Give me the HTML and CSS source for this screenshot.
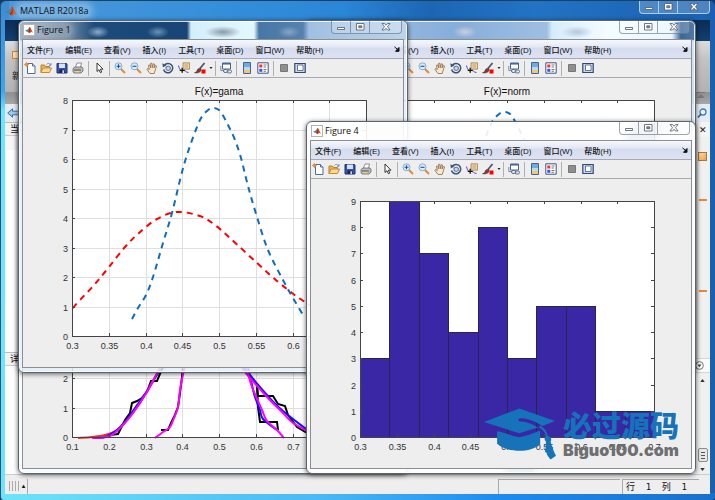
FILE: index.html
```html
<!DOCTYPE html>
<html lang="zh-CN">
<head>
    <meta charset="UTF-8">
    <meta name="viewport" content="width=device-width, initial-scale=1.0">
    <title>MATLAB R2018a</title>
    <link rel="stylesheet" href="styles.css">
</head>
<body>
    <svg class="defs" aria-hidden="true">
        <symbol id="logo" viewBox="0 0 12 12">
            <path d="M0 7l3.500-1.500L7 2l1 2-3.500 5-1.500-.5z" fill="#3f86b8"/>
            <path d="M7 1c1.500 1 2.500 5 5 9l-2.500-1.500L7 11 4.500 9C6 7 6 3 7 1z" fill="#d9480f"/>
            <path d="M7 1c.6 3 .6 6-2.500 8l1 .8C8 8 8.500 5 7 1z" fill="#7c2514"/>
        </symbol>
        <symbol id="new" viewBox="0 0 12 12">
            <path d="M3.500 1.500h5l2.500 2.500v7.500H3.500z" fill="#fff" stroke="#4b6f9f"/>
            <path d="M8.500 1.500V4H11" fill="#cfe0f5" stroke="#4b6f9f"/>
            <path d="M0 2.500h5M2.500 0v5M1 1l3 3M4 1L1 4" stroke="#e8883a" stroke-width=".9"/>
        </symbol>
        <symbol id="open" viewBox="0 0 12 12">
            <path d="M1 10.500V3h3.500l1 1.500h4V6" fill="#e8b45f" stroke="#b97f2a"/>
            <path d="M1 10.500L3 6h8.500l-2 4.500z" fill="#fbd98d" stroke="#c58a32"/>
            <path d="M6.500 2.500c1-1.500 3-1.500 4 .5M11 1v2.300H9" fill="none" stroke="#4a7fc0" stroke-width=".8"/>
        </symbol>
        <symbol id="save" viewBox="0 0 12 12">
            <path d="M1 1.500h9.500l.5.5v9H1z" fill="#3355b5" stroke="#1f2f7a"/>
            <path d="M3 1.500h6V6H3z" fill="#d6e4fb"/>
            <path d="M3.500 7.500h5V11h-5z" fill="#1d2348"/>
            <path d="M6.500 8.300h1.300V11H6.500z" fill="#fff"/>
        </symbol>
        <symbol id="print" viewBox="0 0 12 12">
            <path d="M3.500 5L5 1h4.500L8.500 5" fill="#fff" stroke="#777" stroke-width=".8"/>
            <path d="M1 6.500L3 5h7l1 1.500V9L9 11H2L1 9.500z" fill="#b9bcc0" stroke="#666" stroke-width=".8"/>
            <path d="M2 8h7" stroke="#555"/>
            <path d="M3 9.700h4.500" stroke="#e8e06a"/>
        </symbol>
        <symbol id="cursor" viewBox="0 0 12 12">
            <path d="M4 1v8.500L6 7.700l1.400 3 1.300-.6-1.300-2.900H10z" fill="#fff" stroke="#222" stroke-width=".9"/>
        </symbol>
        <symbol id="zoomin" viewBox="0 0 12 12">
            <path d="M6.500 6.500l4.500 4.500" stroke="#e08a3c" stroke-width="2"/>
            <circle cx="4.500" cy="4.300" r="3.500" fill="#d9ecfa" stroke="#7fb0d8"/>
            <path d="M2.500 4.300h4M4.500 2.300v4" stroke="#1d4fa0" stroke-width="1.100"/>
        </symbol>
        <symbol id="zoomout" viewBox="0 0 12 12">
            <path d="M6.500 6.500l4.500 4.500" stroke="#e08a3c" stroke-width="2"/>
            <circle cx="4.500" cy="4.300" r="3.500" fill="#d9ecfa" stroke="#7fb0d8"/>
            <path d="M2.500 4.300h4" stroke="#1d4fa0" stroke-width="1.100"/>
        </symbol>
        <symbol id="hand" viewBox="0 0 12 12">
            <path d="M4 11.500L.8 7.200l.9-.8 1.700 1.200-1-4.300 1.200-.4 1.200 3-.2-4.600h1.300L6.400 5.600l.9-3.900 1.200.3-.5 4 1.400-2.600 1.100.5-1.500 5-.8 2.600z" fill="#fbe6cc" stroke="#8a6a48" stroke-width=".8"/>
        </symbol>
        <symbol id="rotate" viewBox="0 0 12 12">
            <path d="M2.300 3.200A4.700 4.700 0 1 1 1.500 7.500" fill="none" stroke="#39557d" stroke-width="1.500"/>
            <path d="M.3 1.300l.6 4 3.600-1.500z" fill="#39557d"/>
            <path d="M4 5l2.200-.9L8.300 5v2.600l-2.100 1L4 7.600z" fill="#c9d6e8" stroke="#39557d" stroke-width=".8"/>
        </symbol>
        <symbol id="datatip" viewBox="0 0 12 12">
            <path d="M5 .8h6.500v6.400H5z" fill="#ecd0a0" stroke="#a58250" stroke-width=".8"/>
            <path d="M6.500 3h3.500M6.500 5h3.500" stroke="#b99667" stroke-width=".7"/>
            <path d="M.5 3.500C1.500 8 3 9 5 8.500s3 2 5.500 2" fill="none" stroke="#3c3cd0" stroke-width=".9"/>
            <path d="M1.700 8.300h5M4.200 5.800v5" stroke="#111" stroke-width="1.300"/>
        </symbol>
        <symbol id="brush" viewBox="0 0 12 12">
            <path d="M10.500 1L6 6.500" stroke="#445a78" stroke-width="1.800"/>
            <path d="M6.700 6.400C5 6 3.500 7 3 8.500S1.500 10.500.5 10.700c2.500.8 6 0 6.700-2.700z" fill="#8b3a32" stroke="#333" stroke-width=".5"/>
            <path d="M7.500 7.500h4v4h-4z" fill="#f00"/>
        </symbol>
        <symbol id="caret" viewBox="0 0 4 12"><path d="M.5 5h3L2 7z" fill="#222"/></symbol>
        <symbol id="link" viewBox="0 0 12 12">
            <path d="M2.500 1h8v6h-8z" fill="#fff" stroke="#446790"/>
            <path d="M2.500 1.800h8" stroke="#446790" stroke-width="1.500"/>
            <path d="M.8 4v4.500H6" fill="none" stroke="#6f8fb5"/>
            <rect x="3.500" y="7.500" width="4.500" height="3" rx="1.500" fill="#e5ebf2" stroke="#5a6f8c"/>
            <rect x="7" y="8" width="4.500" height="3" rx="1.500" fill="none" stroke="#5a6f8c"/>
        </symbol>
        <symbol id="colorbar" viewBox="0 0 12 12">
            <path d="M2.500.5h7v11h-7z" fill="#fff" stroke="#46648f"/>
            <path d="M3 1h6v4H3z" fill="#69afe0"/>
            <path d="M3 5h6v3H3z" fill="#b9dde6"/>
            <path d="M3 8h6v3H3z" fill="#f2c67a"/>
        </symbol>
        <symbol id="legend" viewBox="0 0 12 12">
            <path d="M.8.8h10.400v10.400H.8z" fill="#fff" stroke="#3d567d"/>
            <path d="M2.300 2.500h3v3h-3z" fill="#e03a3a"/>
            <path d="M2.300 6.800h3v3h-3z" fill="#3a55d8"/>
            <path d="M6.500 3h3M6.500 5h2.500M6.500 7.500h3M6.500 9.300h2.500" stroke="#555" stroke-width=".8"/>
        </symbol>
        <symbol id="hidetools" viewBox="0 0 12 12">
            <path d="M2.500 2.500h7v7h-7z" fill="#8e8e8e" stroke="#777"/>
        </symbol>
        <symbol id="showtools" viewBox="0 0 12 12">
            <path d="M.8 1.500h10.400v9H.8z" fill="#cdd9ea" stroke="#2f4a75" stroke-width="1.200"/>
            <path d="M3.500 3h5.500v5.500H3.500z" fill="#fff" stroke="#2f4a75" stroke-width=".7"/>
        </symbol>
        <symbol id="min" viewBox="0 0 12 10"><path d="M2.500 5.500h7v2h-7z" fill="#fff" stroke="#4c5866" stroke-width=".8"/></symbol>
        <symbol id="max" viewBox="0 0 12 10">
            <path d="M2.500 1.500h7.500v6.500H2.500z" fill="#fff" stroke="#4c5866" stroke-width=".8"/>
            <path d="M4.800 3.800h3v1.900h-3z" fill="#8a98a8" stroke="#4c5866" stroke-width=".8"/>
        </symbol>
        <symbol id="close" viewBox="0 0 12 10">
            <path d="M2 1.500h2.500L6 3.300l1.500-1.800H10L7.500 4.700 10 8H7.500L6 6.200 4.500 8H2l2.500-3.300z" fill="#fff" stroke="#4c5866" stroke-width=".8"/>
        </symbol>
    </svg>

    <div class="app">
        <header class="titlebar">
            <svg class="logo"><use href="#logo"/></svg>
            <h1>MATLAB R2018a</h1>
            <div class="win-buttons">
                <button aria-label="最小化"><svg><use href="#min"/></svg></button>
                <button aria-label="最大化"><svg><use href="#max"/></svg></button>
                <button class="close" aria-label="关闭"><svg><use href="#close"/></svg></button>
            </div>
        </header>
        <div class="tabs"></div>
        <div class="ribbon">
            <button class="ribbon-new"><i></i>新</button>
            <svg class="pin" viewBox="0 0 8 8"><path d="M0 .5h8" stroke="#777"/><path d="M4 2l4 4H0z" fill="#777"/></svg>
        </div>
        <div class="address">
            <button aria-label="后退"><svg class="back" viewBox="0 0 12 10"><path d="M.7 5L5.500.8v2.400h6v3.600h-6v2.400z" fill="#9cc9ee" stroke="#3b6ea5"/></svg></button>
            <button aria-label="搜索"><svg class="search" viewBox="0 0 10 10"><circle cx="6" cy="4" r="3" fill="#e6f3ff" stroke="#3a7cc4" stroke-width="1.300"/><path d="M4 6L1 9.500" stroke="#2b62a5" stroke-width="1.700"/></svg></button>
        </div>
        <main class="panels">
            <section class="side">
                <h2>当</h2>
                <div class="files"></div>
                <h2>详</h2>
                <div class="details"></div>
            </section>
            <section class="editor">
                <div class="editor-head"><button aria-label="关闭编辑器">✕</button></div>
                <div class="marks">
                    <i class="mark-state"></i>
                    <i class="mark"></i>
                    <i class="mark second"></i>
                </div>
                <div class="editor-head low"><svg viewBox="0 0 10 10"><circle cx="5" cy="5" r="4.300" fill="#fff" stroke="#666"/><path d="M2.800 4h4.400L5 7z" fill="#444"/></svg></div>
                <div class="scroll">
                    <svg viewBox="0 0 6 4"><path d="M3 0l3 4H0z" fill="#333"/></svg>
                    <i class="thumb"></i>
                    <svg viewBox="0 0 6 4"><path d="M3 4l3-4H0z" fill="#333"/></svg>
                </div>
            </section>
        </main>
        <footer class="statusbar">
            <span class="grip"></span>
            <span class="grip-arrow">▴</span>
            <span class="status-main"></span>
            <span class="status-box"></span>
            <span class="status-box position"><span>行</span><span>1</span><span>列</span><span>1</span></span>
        </footer>
    </div>

    <div class="figure fig3" data-name="Figure 3"></div>
    <div class="figure fig2" data-name="Figure 2"></div>
    <div class="figure fig1" data-name="Figure 1"></div>
    <div class="figure fig4" data-name="Figure 4"></div>

    <div class="watermark">
        <svg viewBox="36 206 214 154">
            <g fill="#1673b9">
                <path d="M36 247L141 207l106 37-37 15c-20-12-42-24-66-23-9 2-8 8 0 10 20 1 38 8 52 18l-55 17z"/>
                <path d="M75 275c20 3 40 12 66 18 22-5 42-12 58-20l4 3v38c-15 12-38 19-62 19s-52-7-66-21z"/>
                <path d="M204 258c12 8 19 18 22 31 10 2 12 10 8 17 4 15 9 29 16 42l-16 11c-7-8-12-14-12-20l-5-3c2-11 3-20 3-30-6-7-5-13 0-18-4-11-9-18-21-25z"/>
            </g>
        </svg>
        <div>
            <p class="brand">必过源码</p>
            <p class="site">Biguo100.com</p>
        </div>
    </div>

    <template id="figure">
        <div class="fig-title">
            <span class="fig-icon"><svg><use href="#logo"/></svg></span>
            <h2></h2>
            <div class="win-buttons">
                <button aria-label="最小化"><svg><use href="#min"/></svg></button>
                <button aria-label="最大化"><svg><use href="#max"/></svg></button>
                <button class="close" aria-label="关闭"><svg><use href="#close"/></svg></button>
            </div>
        </div>
        <div class="fig-body">
            <nav class="menu">
                <button>文件(F)</button>
                <button>编辑(E)</button>
                <button>查看(V)</button>
                <button>插入(I)</button>
                <button>工具(T)</button>
                <button>桌面(D)</button>
                <button>窗口(W)</button>
                <button>帮助(H)</button>
                <svg class="dock" viewBox="0 0 6 6"><path d="M.5.8l3.500 3M5 1.500v3.800H1.500z" fill="#111" stroke="#111"/></svg>
            </nav>
            <div class="toolbar"></div>
            <svg class="plot" viewBox="0 0 380 289"></svg>
        </div>
    </template>

    <script>
        const tools = ['new', 'open', 'save', 'print', '|', 'cursor', '|', 'zoomin', 'zoomout', 'hand',
            'rotate', 'datatip', 'brush', 'caret', '|', 'link', '|', 'colorbar', 'legend', '|', 'hidetools', 'showtools'];

        // axes box inside the 380x289 plot area
        const left = 49, right = 343, top_ = 22, bottom = 258;

        function line(x1, y1, x2, y2, cls) {
            return `<path class="${cls}" d="M${x1} ${y1}L${x2} ${y2}"/>`;
        }

        function smooth(p) {
            let d = `M${p[0]}`;
            for (let i = 0; i < p.length - 1; i++) {
                const a = p[i - 1] || p[i], b = p[i], c = p[i + 1], e = p[i + 2] || c;
                d += `C${b[0] + (c[0] - a[0]) / 6} ${b[1] + (c[1] - a[1]) / 6} ${c[0] - (e[0] - b[0]) / 6} ${c[1] - (e[1] - b[1]) / 6} ${c[0]} ${c[1]}`;
            }
            return d;
        }

        function curve(points, cls) {
            return `<path class="curve ${cls}" d="${smooth(points)}"/>`;
        }

        function steps(points, cls) {
            return `<path class="curve ${cls}" d="M${points.join('L')}"/>`;
        }

        function axes(xLabels, yMax, grid, title, content) {
            let back = `<rect class="area" x="${left}" y="${top_}" width="${right - left}" height="${bottom - top_}"/>`;
            let front = '';
            xLabels.forEach((label, i) => {
                const x = Math.round(left + i * (right - left) / (xLabels.length - 1)) + 0.5;
                if (grid) back += line(x, top_, x, bottom, 'grid');
                front += line(x, top_, x, top_ + 3, 'axis') + line(x, bottom - 3, x, bottom, 'axis');
                front += `<text class="tick" text-anchor="middle" x="${x}" y="${bottom + 13}">${label}</text>`;
            });
            for (let i = 0; i <= yMax; i++) {
                const y = Math.round(bottom - i * (bottom - top_) / yMax) + 0.5;
                if (grid) back += line(left, y, right, y, 'grid');
                front += line(left, y, left + 3, y, 'axis') + line(right - 3, y, right, y, 'axis');
                front += `<text class="tick" text-anchor="end" x="${left - 4}" y="${y + 3}">${i}</text>`;
            }
            front += `<path class="axis" d="M${left}.5 ${top_}.5H${right}.5V${bottom}.5H${left}.5z"/>`;
            front += `<text class="plot-title" text-anchor="middle" x="196" y="17">${title}</text>`;
            return back + content + front;
        }

        function bars(values, yMax) {
            const w = (right - left) / values.length;
            return values.map((v, i) => {
                const x = Math.round(left + i * w), x2 = Math.round(left + (i + 1) * w);
                const y = Math.round(bottom - v * (bottom - top_) / yMax);
                return `<rect class="bar" x="${x}.5" y="${y}.5" width="${x2 - x}" height="${bottom - y}"/>`;
            }).join('');
        }

        const gamaX = ['0.3', '0.35', '0.4', '0.45', '0.5', '0.55', '0.6', '0.65', '0.7'];
        const cdfX = ['0.1', '0.2', '0.3', '0.4', '0.5', '0.6', '0.7', '0.8', '0.9'];

        const wide = [[50, 230], [57, 222], [72, 206], [86, 189], [102, 169], [116, 155], [134, 141], [154, 134], [177, 138],
            [192, 147], [207, 160], [234, 185], [254, 203], [269, 215], [279, 222], [300, 234], [344, 250]];
        const narrow = [[109, 241], [115, 230], [123, 217], [130, 199], [140, 165], [149, 135], [159, 94], [167, 68], [177, 42],
            [184, 33], [190, 30], [197, 33], [205, 47], [212, 62], [218, 80], [225, 108], [234, 139], [245, 172], [260, 202],
            [270, 220], [280, 237]];

        const plots = {
            'Figure 1': axes(gamaX, 8, true, 'F(x)=gama', curve(wide, 'red dash') + curve(narrow, 'blue dash')),
            'Figure 2': axes(gamaX, 8, false, 'F(x)=norm', curve(narrow.map(p => [p[0] + 3, p[1] + 4]), 'blue dash')),
            'Figure 3': axes(cdfX, 8, true, '',
                steps([[87, 256], [95, 255], [102, 241], [107, 234], [109, 224], [114, 222], [119, 219], [124, 213], [128, 202], [134, 202], [139, 190], [144, 184]], 'black') +
                steps([[138, 251], [145, 251], [148, 244], [151, 238], [155, 228], [157, 214], [159, 198], [160, 184]], 'black') +
                steps([[222, 190], [227, 198], [234, 206], [235, 217], [250, 217], [255, 225], [262, 227], [265, 236], [274, 248], [284, 254]], 'black') +
                steps([[227, 196], [234, 206], [235, 228], [237, 243], [254, 243], [255, 251]], 'black') +
                curve([[55, 259], [69, 258], [82, 256], [94, 251], [105, 240], [117, 224], [132, 198], [140, 184]], 'scarlet') +
                curve([[225, 188], [229, 206], [232, 218], [237, 231], [240, 240], [254, 251]], 'navy') +
                curve([[70, 259], [82, 258], [94, 251], [102, 243], [112, 229], [124, 212], [141, 184]], 'navy') +
                curve([[220, 188], [244, 216], [260, 232], [287, 253]], 'navy') +
                curve([[69, 259], [87, 257], [100, 246], [110, 234], [124, 213], [135, 193], [141, 184]], 'magenta') +
                curve([[132, 259], [140, 253], [147, 248], [151, 239], [155, 228], [157, 211], [161, 191], [163, 184]], 'magenta') +
                curve([[222, 184], [225, 194], [229, 208], [239, 231], [244, 242], [254, 251], [261, 259]], 'magenta') +
                curve([[216, 184], [222, 193], [244, 218], [260, 234], [270, 244], [287, 253]], 'magenta')),
            'Figure 4': axes(gamaX, 9, false, '', bars([3, 9, 7, 4, 8, 3, 5, 5, 1, 1], 9))
        };

        document.querySelectorAll('.figure').forEach(figure => {
            figure.append(document.getElementById('figure').content.cloneNode(true));
            figure.querySelector('h2').textContent = figure.dataset.name;
            figure.querySelector('.toolbar').innerHTML = tools.map(name => name === '|'
                ? '<i class="sep"></i>'
                : `<button class="tool-${name}" aria-label="${name}"><svg><use href="#${name}"/></svg></button>`).join('');
            figure.querySelector('.plot').innerHTML = plots[figure.dataset.name];
        });
    </script>
</body>
</html>
```

FILE: styles.css
```css
* {
    box-sizing: border-box;
}
body {
    margin: 0;
    position: relative;
    min-height: 100vh;
    overflow: hidden;
    background: #0f3b6b;
    font-family: "Liberation Sans", "Noto Sans CJK SC", sans-serif;
    font-size: 9px;
    color: #111;
}
h1, h2, p {
    margin: 0;
    font-weight: normal;
}
button {
    padding: 0;
    border: 0;
    background: none;
    font: inherit;
    color: inherit;
}
svg {
    display: block;
}
.defs {
    position: absolute;
    width: 0;
    height: 0;
}

/* main window */
.app {
    display: flex;
    flex-direction: column;
    min-height: 100vh;
    padding: 0 5px 6px 4px;
    border-top: 1px solid #1b3f66;
    border-left: 1px solid #27557f;
    border-radius: 6px 6px 4px 4px;
    background:
        linear-gradient(90deg, #6fe3f8, #4ab8f5 45%, #1e8bef 70%, #1b6fca) bottom / 100% 7px no-repeat,
        linear-gradient(180deg, #3f8bd0 0, #3aa6ee 90px, #6ee6fa 110px, #6fe3f8) left / 8px 100% no-repeat,
        linear-gradient(90deg, #4d98d8 0, #3590da 30%, #2a86d6 48%, #1d66b4 60%, #2273c4 75%, #1a60ae);
}
.titlebar {
    display: flex;
    align-items: center;
    height: 19px;
    flex: none;
}
.titlebar .logo {
    width: 12px;
    height: 12px;
}
.titlebar h1 {
    padding: 0 3px;
    border-radius: 8px;
    font: 9px/14px "Open Sans", sans-serif;
    background: rgba(255, 255, 255, .25);
    box-shadow: 0 0 6px 3px rgba(255, 255, 255, .25);
}
.win-buttons {
    display: flex;
    align-self: flex-start;
    margin-left: auto;
    border: 1px solid rgba(90, 105, 125, .6);
    border-top: 0;
    border-radius: 0 0 4px 4px;
    background: rgba(255, 255, 255, .22);
}
.win-buttons button {
    display: flex;
    align-items: center;
    justify-content: center;
    width: 19px;
    height: 12px;
    border-right: 1px solid rgba(90, 105, 125, .6);
}
.win-buttons .close {
    width: 31px;
    border-right: 0;
}
.win-buttons svg {
    width: 12px;
    height: 10px;
}
.titlebar .win-buttons {
    border-color: #a9cdf0;
}
.titlebar .win-buttons button {
    border-color: #a9cdf0;
}
.tabs {
    height: 21px;
    flex: none;
    background: linear-gradient(180deg, #0b2c54, #123f70);
}
.ribbon {
    display: flex;
    justify-content: space-between;
    height: 63px;
    flex: none;
    background: linear-gradient(180deg, #dcdcdc, #c2c2c2 30%, #b2b2b2 80%, #8f8f8f 82%, #a8a8a8);
}
.ribbon-new {
    display: flex;
    flex-direction: column;
    align-items: center;
    gap: 10px;
    margin-left: 7px;
    padding-top: 10px;
    align-self: flex-start;
}
.ribbon-new i {
    width: 9px;
    height: 8px;
    border: 1px solid #d58436;
    background: #fbe0b0;
}
.pin {
    width: 8px;
    height: 8px;
    align-self: flex-end;
    margin: 0 5px 4px 0;
}
.address {
    display: flex;
    justify-content: space-between;
    align-items: center;
    height: 18px;
    flex: none;
    padding: 0 3px 0 2px;
    background: #e6ebf3;
}
.back {
    width: 12px;
    height: 10px;
}
.search {
    width: 10px;
    height: 10px;
}
.panels {
    display: flex;
    justify-content: space-between;
    flex: 1;
    background: #f0f0f0;
}
.side {
    display: flex;
    flex-direction: column;
    width: 50%;
    background: #fff;
}
.side h2 {
    height: 14px;
    padding-left: 5px;
    font-size: 9px;
    line-height: 12px;
    border-top: 1px solid #bbb;
    border-bottom: 1px solid #ccc;
    background: #f2f2f2;
}
.files {
    flex: 15;
    border-top: 14px solid #f6f6f8;
}
.details {
    flex: 8;
}
.editor {
    display: flex;
    flex-direction: column;
    width: 15px;
}
.editor-head {
    display: flex;
    justify-content: center;
    align-items: center;
    height: 15px;
    background: #f4f4f4;
}
.editor-head.low {
    justify-content: flex-start;
    border: 1px solid #d5d5d5;
    border-width: 1px 0;
    background: #fafafa;
}
.editor-head svg {
    width: 9px;
    height: 9px;
}
.marks {
    display: flex;
    flex-direction: column;
    align-items: center;
    flex: 223;
    padding-top: 15px;
}
.mark-state {
    width: 9px;
    height: 9px;
    border: 1px solid #a87838;
    background: linear-gradient(135deg, #ffdf9f, #e9a04e);
}
.mark {
    width: 8px;
    height: 2px;
    margin-top: 38px;
    background: #e8873a;
}
.mark.second {
    margin-top: 89px;
}
.scroll {
    display: flex;
    flex-direction: column;
    align-items: center;
    flex: 100;
    padding: 6px 2px 3px;
}
.scroll svg {
    width: 5px;
    height: 3px;
}
.thumb {
    width: 10px;
    height: 14px;
    margin: auto 0 6px;
    border: 1px solid #8c8c8c;
    border-radius: 2px;
    background:
        repeating-linear-gradient(180deg, #555 0 1px, transparent 1px 3px) center / 4px 7px no-repeat,
        #e8e8e8;
}
.statusbar {
    display: flex;
    align-items: center;
    height: 20px;
    flex: none;
    padding: 3px 9px 0 4px;
    border-top: 1px solid #ccc;
    background: #eee;
}
.grip {
    width: 11px;
    height: 10px;
    background: repeating-linear-gradient(90deg, #aaa 0 1px, transparent 1px 3px);
}
.grip-arrow {
    width: 7px;
    font: 7px/12px "DejaVu Sans", sans-serif;
    text-align: center;
}
.status-main {
    flex: 1;
    height: 15px;
    border-left: 1px solid #aaa;
}
.status-box {
    width: 122px;
    height: 15px;
    margin-right: 2px;
    border-top: 1px solid #aaa;
    border-left: 1px solid #aaa;
}
.position {
    display: flex;
    justify-content: space-between;
    width: 77px;
    padding: 0 12px 0 3px;
    font: 9px/14px "DejaVu Sans Mono", "Noto Sans CJK SC", monospace;
}

/* figure windows */
.figure {
    position: absolute;
    padding: 0 3px 4px;
    border: 1px solid #5b646e;
    border-radius: 6px;
    background: rgba(244, 250, 254, .85);
    box-shadow: inset 0 0 0 1px rgba(255, 255, 255, .8), 0 1px 5px rgba(0, 0, 0, .6);
}
.fig1, .fig3 {
    left: 18px;
    right: 307px;
}
.fig2, .fig4 {
    left: 306px;
    right: 19px;
}
.fig1, .fig2 {
    top: 20px;
}
.fig3, .fig4 {
    top: 121px;
}
.fig1 {
    background:
        radial-gradient(ellipse 11px 6px at 79px 11px, #8facc6, transparent) no-repeat,
        radial-gradient(ellipse 11px 6px at 139px 11px, #6d92b5, transparent) no-repeat,
        radial-gradient(ellipse 18px 6px at 204px 11px, #8799a8, transparent) no-repeat,
        radial-gradient(ellipse 11px 6px at 270px 11px, #87a6c5, transparent) no-repeat,
        linear-gradient(90deg, #a5b5c6 0, #6f88a3 50px, #1d4c7c 75px, #174676 168px, #d3effa 172px, #e2f8fd 235px, #4777a6 240px, #5681ae 284px, #a0c0e2 290px, #bcd4ec) top / 100% 19px no-repeat,
        rgba(226, 240, 250, .85);
}
.fig2 {
    background:
        radial-gradient(ellipse 12px 6px at 158px 11px, #c9cfd8, transparent) no-repeat,
        radial-gradient(ellipse 16px 6px at 270px 11px, #b4c8dc, transparent) no-repeat,
        linear-gradient(90deg, #a5c4e5 0, #86aedb 150px, #9fbfe1 240px, #d5edf9 245px, #f4fcff 300px, #e9f7fd 365px, #3a6697 374px, #517aa8) top / 100% 19px no-repeat,
        rgba(212, 230, 244, .85);
}
.fig4 {
    background: linear-gradient(110deg, rgba(255, 255, 255, .9) 0 62%, rgba(238, 242, 245, .9) 64% 68%, rgba(255, 255, 255, .9) 70%);
}
.fig-title {
    display: flex;
    align-items: center;
    height: 18px;
    padding: 0 2px 0 1px;
}
.fig-icon {
    padding: 1px;
    border: 1px solid #b5b5b5;
    background: #fff;
}
.fig-icon svg {
    width: 8px;
    height: 8px;
}
.fig-title h2 {
    padding: 0 2px;
    font: 9px/14px "Open Sans", sans-serif;
}
.fig1 h2 {
    border-radius: 8px;
    background: rgba(255, 255, 255, .15);
    box-shadow: 0 0 5px 2px rgba(255, 255, 255, .15);
}
.fig-body {
    border: 1px solid #8a8f96;
    background: #eee;
}
.menu {
    display: flex;
    align-items: center;
    gap: 12px;
    height: 19px;
    padding: 0 3px 0 4px;
    border-bottom: 1px solid #a6a9b5;
    background: linear-gradient(180deg, #f6f8fc, #e2e7f4 40%, #d5dcee 45%, #dde3f3);
    font-size: 8px;
    font-weight: 500;
    white-space: nowrap;
}
.dock {
    width: 6px;
    height: 6px;
    margin-left: auto;
}
.toolbar {
    display: flex;
    align-items: center;
    height: 19px;
    margin-left: -1px;
    border-bottom: 1px solid #aaa;
}
.toolbar button {
    display: flex;
    justify-content: center;
    width: 16px;
}
.toolbar .tool-caret {
    width: 5px;
}
.toolbar svg {
    width: 12px;
    height: 12px;
}
.toolbar .tool-caret svg {
    width: 4px;
}
.sep {
    width: 1px;
    height: 15px;
    margin: 0 2px;
    background: #b0b0b0;
}
.plot {
    width: 100%;
}
.area {
    fill: #fff;
}
.grid {
    stroke: #dfdfdf;
}
.axis {
    fill: none;
    stroke: #444;
}
.tick {
    font-size: 9px;
    fill: #333;
}
.plot-title {
    font-size: 10px;
    fill: #111;
}
.bar {
    fill: #3a27a6;
    stroke: #2b2350;
}
.curve {
    fill: none;
    stroke-width: 2;
}
.dash {
    stroke-dasharray: 6 5;
}
.red {
    stroke: #f00;
}
.scarlet {
    stroke: #f22;
}
.blue {
    stroke: #0f6cbd;
}
.navy {
    stroke: #11f;
}
.magenta {
    stroke: #f0f;
}
.black {
    stroke: #000;
}

.watermark {
    position: absolute;
    right: 36px;
    bottom: 40px;
    display: flex;
    align-items: flex-start;
    gap: 7px;
}
.watermark svg {
    width: 72px;
    height: 52px;
}
.brand {
    font: 900 29px/32px "Noto Sans CJK SC", sans-serif;
    color: #1673b9;
}
.site {
    font: 900 16px/20px Inter, sans-serif;
    color: #6d6f70;
}
```
